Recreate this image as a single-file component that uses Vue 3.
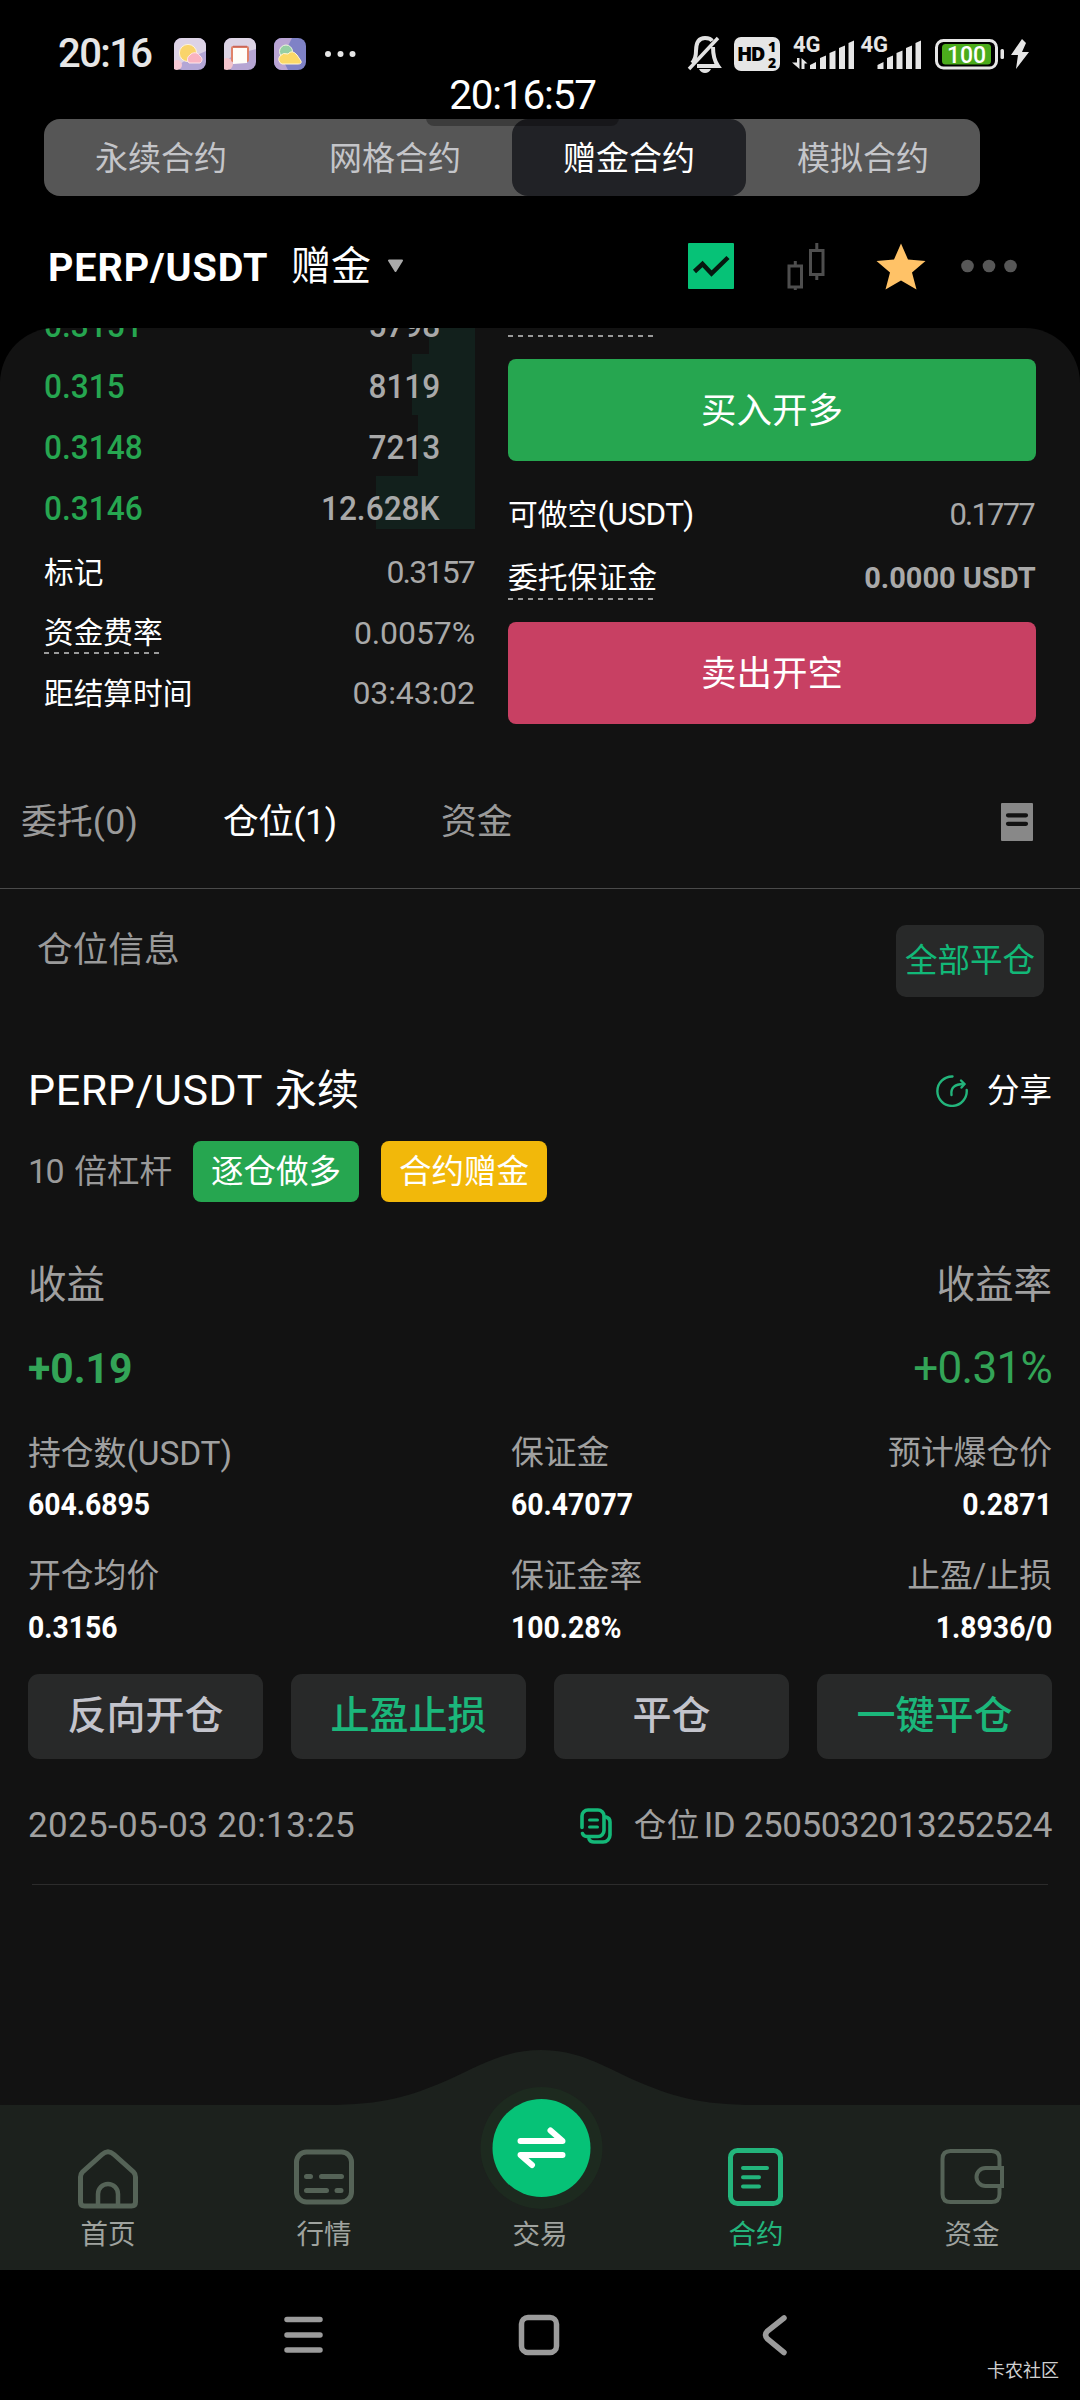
<script setup>
const tabs = [
  { label: '永续合约' },
  { label: '网格合约' },
  { label: '赠金合约', active: true },
  { label: '模拟合约' },
]

const bids = [
  { price: '0.3151', qty: '5798', depth: 46 },
  { price: '0.315', qty: '8119', depth: 63 },
  { price: '0.3148', qty: '7213', depth: 57 },
  { price: '0.3146', qty: '12.628K', depth: 99 },
]

const info = [
  { label: '标记', value: '0.3157', tight: true },
  { label: '资金费率', value: '0.0057%', dashed: true },
  { label: '距结算时间', value: '03:43:02' },
]

const stats = [
  { label: '持仓数', unit: '(USDT)', value: '604.6895' },
  { label: '保证金', value: '60.47077' },
  { label: '预计爆仓价', value: '0.2871' },
  { label: '开仓均价', value: '0.3156' },
  { label: '保证金率', value: '100.28%' },
  { label: '止盈/止损', value: '1.8936/0' },
]

const actions = [
  { label: '反向开仓' },
  { label: '止盈止损', green: true },
  { label: '平仓' },
  { label: '一键平仓', green: true },
]
</script>

<template>
  <div class="screen">
    <header class="status">
      <div class="status-left">
        <span class="status-time">20:16</span>
        <svg class="app" viewBox="0 0 32 32">
          <rect width="32" height="32" rx="8" fill="#b3a6d6" />
          <path d="M0 8a8 8 0 0 1 8-8h16a8 8 0 0 1 8 8v5L12 22 0 30z" fill="#ddd3e6" />
          <circle cx="3" cy="27" r="5" fill="#f6c9d4" />
          <circle cx="14" cy="15" r="8.6" fill="#f9d46b" stroke="#fff3d6" />
          <path d="M15 25a5 5 0 0 1 1-8 6 6 0 0 1 10 1 4 4 0 0 1 0 7z" fill="#f9b3c1" stroke="#ffe6ea" />
        </svg>
        <svg class="app" viewBox="0 0 32 32">
          <rect width="32" height="32" rx="8" fill="#b6a5d3" />
          <path d="M0 8a8 8 0 0 1 8-8h16a8 8 0 0 1 8 8v3L10 17 0 24z" fill="#dcd3e4" />
          <circle cx="3" cy="26" r="6" fill="#f4c4cc" />
          <rect x="7" y="8" width="18" height="16" rx="2" fill="#e08267" />
          <path d="M9 10h14v15l-14 1z" fill="#fffdf8" />
          <path d="M9 8.500h14" stroke="#c96558" stroke-width="1.500" />
        </svg>
        <svg class="app" viewBox="0 0 32 32">
          <rect width="32" height="32" rx="8" fill="#7f82c6" />
          <path d="M0 8a8 8 0 0 1 8-8h10L8 20l6 12H8a8 8 0 0 1-8-8z" fill="#b9a4d4" />
          <circle cx="12" cy="13.500" r="6.500" fill="#97cfa4" stroke="#eef6dc" />
          <path d="M8 26a5 5 0 0 1-2-8q3-4 8-2 4-5 9 1l4 6q1 3-3 3z" fill="#fbd968" stroke="#fff6d8" />
        </svg>
        <svg class="more" viewBox="0 0 32 8">
          <circle cx="4" cy="4" r="3" /><circle cx="16.500" cy="4" r="3" /><circle cx="28.500" cy="4" r="3" />
        </svg>
      </div>
      <svg class="status-right" viewBox="686 34 346 42">
        <g fill="none" stroke="#e2e2e2" stroke-width="4">
          <path d="M692 63q4-4 4-12c0-8 3-13 9-13 3 0 6 1 7 3" />
          <path d="M713 47q0 12 5 19H697" />
          <path d="M689 69L718 38" stroke-width="3.500" />
        </g>
        <path d="M699 69h12q-2 4-6 4t-6-4z" fill="#e2e2e2" />
        <rect x="734" y="37" width="46" height="34" rx="7" fill="#e6e6e6" />
        <text x="737" y="61" class="hd">HD</text>
        <text x="768" y="52" class="hd-num">1</text>
        <text x="768" y="67.500" class="hd-num">2</text>
        <g fill="#e6e6e6">
          <text x="793" y="52" class="net">4G</text>
          <text x="860.500" y="52" class="net">4G</text>
          <path d="M797 58h2.500v11L792 62.500h5zM801.500 69V58l6 5.500h-3V69z" />
          <path d="M810 69v-4l6-3v7zM820 69V58l6-2.500V69zM829.500 69V53l6-2.500V69zM839 69V48l6-2.500V69zM848.500 69V43l5.500-2.500V69z" />
          <path d="M877.500 69v-4l6-3v7zM887 69V58l6-2.500V69zM896.500 69V53l6-2.500V69zM906 69V48l6-2.500V69zM915.500 69V43l5.500-2.500V69z" />
          <rect x="1000.500" y="49" width="3.500" height="10" rx="1.500" />
          <path d="M1022 39l-11 16h7l-2 14 13-17h-7l4-9z" />
        </g>
        <rect x="936.500" y="40.500" width="60" height="27.500" rx="7" fill="none" stroke="#e6e6e6" stroke-width="3" />
        <rect x="942" y="44" width="49" height="20.500" rx="3.500" fill="#4bab1c" />
        <text x="966.500" y="62.500" class="batt">100</text>
      </svg>
      <div class="clock">20:16:57</div>
    </header>

    <nav class="tabs">
      <div v-for="t in tabs" :key="t.label" class="tab" :class="{ active: t.active }">{{ t.label }}</div>
    </nav>

    <section class="pair">
      <b class="pair-name">PERP/USDT</b>
      <span class="pair-kind">赠金</span>
      <svg class="caret" viewBox="0 0 17 14"><path d="M2 1.500h13L8.500 12z" fill="#aaa" stroke="#aaa" stroke-width="2" stroke-linejoin="round" /></svg>
      <svg class="pair-tools" viewBox="0 0 334 48">
        <rect x="0" y="1" width="46" height="46" rx="1" fill="#06c277" />
        <path d="M6.500 29.500l8-7.500 9 9.500L40 15.500" fill="none" stroke="#06170f" stroke-width="4.500" />
        <g fill="none" stroke="#4e4e4e" stroke-width="3">
          <rect x="101" y="24" width="12.500" height="21" /><path d="M107.300 19v5M107.300 45v3" />
          <rect x="122.500" y="8.500" width="12.500" height="24" /><path d="M128.800 1v7M128.800 33v5" />
        </g>
        <path d="M213 1.500l7 16 17.500 1.500-13.500 11.500 4.500 17L213 38.500l-15.500 9 4.500-17L188.500 19l17.500-1.500z" fill="#ffc267" />
        <g fill="#575757"><circle cx="279.500" cy="24" r="6.300" /><circle cx="301" cy="24" r="6.300" /><circle cx="322.500" cy="24" r="6.300" /></g>
      </svg>
    </section>

    <main class="panel">
      <section class="trade">
        <div class="book">
          <div v-for="b in bids" :key="b.price" class="bid">
            <span class="din price">{{ b.price }}</span>
            <span class="qty"><span class="din right">{{ b.qty }}</span></span>
            <i class="depth" :style="{ width: b.depth + 'px' }"></i>
          </div>
          <div class="info">
            <div v-for="r in info" :key="r.label" class="info-row">
              <span class="info-label" :class="{ dashed: r.dashed }">{{ r.label }}</span>
              <span class="info-value" :class="{ tight: r.tight }">{{ r.value }}</span>
            </div>
          </div>
        </div>
        <div class="order">
          <div class="dash-line"></div>
          <button class="big buy">买入开多</button>
          <div class="order-rows">
            <div class="order-row"><span class="short">可做空<span class="unit">(USDT)</span></span><span class="avail">0.1777</span></div>
            <div class="order-row"><span class="dashed">委托保证金</span><b class="margin">0.0000 USDT</b></div>
          </div>
          <button class="big sell">卖出开空</button>
        </div>
      </section>

      <nav class="subtabs">
        <span class="sub s1">委托(0)</span>
        <span class="sub s2 on">仓位(1)</span>
        <span class="sub">资金</span>
        <svg class="doc" viewBox="0 0 32 38"><rect width="32" height="38" rx="1" fill="#888" /><path d="M7 12.300h18M7 20.800h18" stroke="#121212" stroke-width="4.200" stroke-linecap="round" /></svg>
      </nav>

      <div class="list-head">
        <span class="list-title">仓位信息</span>
        <button class="close-all">全部平仓</button>
      </div>

      <article class="position">
        <div class="title-row">
          <span class="symbol">PERP/USDT</span><span class="kind">永续</span>
          <span class="share">
            <svg viewBox="0 0 32 32" fill="none" stroke="#23b57c" stroke-width="2.400" stroke-linecap="round">
              <path d="M16.500 1.500A14.700 14.700 0 1 0 30.700 15" />
              <path d="M15.500 20c-1-7 3-11 12-11" /><path d="M25 5.500l3.500 3.500-3 3.500" />
            </svg>分享
          </span>
        </div>
        <div class="badge-row">
          <span class="lever"><span class="lever-num">10</span> 倍杠杆</span>
          <span class="badge long">逐仓做多</span>
          <span class="badge gift">合约赠金</span>
        </div>
        <div class="pnl-labels"><span>收益</span><span>收益率</span></div>
        <div class="pnl-values"><b class="pnl">+0.19</b><span class="rate">+0.31%</span></div>
        <div class="stats">
          <div v-for="s in stats" :key="s.label" class="stat">
            <div class="stat-label">{{ s.label }}<span v-if="s.unit" class="stat-unit">{{ s.unit }}</span></div>
            <div class="stat-value"><b>{{ s.value }}</b></div>
          </div>
        </div>
        <div class="actions">
          <button v-for="a in actions" :key="a.label" class="action" :class="{ green: a.green }">{{ a.label }}</button>
        </div>
        <div class="meta">
          <span class="num">2025-05-03 20:13:25</span>
          <span class="pid">
            <svg viewBox="0 0 32 36" fill="none" stroke="#14b878" stroke-width="3.600" stroke-linecap="round">
              <path d="M2 19.500V8a6 6 0 0 1 6-6h10a6 6 0 0 1 6 6v14.500a6 6 0 0 1-6 6H6.500a4.500 4.500 0 0 1-4-3" />
              <path d="M26 9q4 1 4 5v13a7 7 0 0 1-7 7h-9q-4 0-5-3" />
              <path d="M9.500 12h8M9.500 19h8" stroke-width="3" />
            </svg>
            <span class="pid-label">仓位</span><span class="num id">ID 2505032013252524</span>
          </span>
        </div>
      </article>

      <nav class="bottom">
        <svg class="hump" viewBox="0 0 1080 220">
          <path d="M0 55H325C385 55 410 46 448 30 480 15 505 0 541 0S602 15 634 30C672 46 697 55 757 55H1080V220H0z" fill="#1c211d" />
          <circle cx="541.500" cy="98" r="61" fill="#1d2a1f" />
          <circle cx="541.500" cy="98" r="49" fill="#06c277" />
          <path d="M520.500 91H562.500L550.500 80.500M562.500 105H520.500L532 115" fill="none" stroke="#fff" stroke-width="6" stroke-linecap="round" stroke-linejoin="round" />
        </svg>
        <div class="item">
          <svg viewBox="0 0 64 62" fill="none" stroke="#556357" stroke-width="5">
            <path d="M4.500 55V30q0-3 2-5L26 7.500q6-5.500 12 0L57.500 25q2 2 2 5v25q0 4-4 4h-47q-4 0-4-4z" />
            <path d="M22 59V47a10 10 0 0 1 20 0v12" stroke-width="4.500" />
          </svg>首页
        </div>
        <div class="item">
          <svg viewBox="0 0 64 62" fill="none" stroke="#556357" stroke-width="5">
            <rect x="4.500" y="5" width="55" height="50" rx="10" />
            <path d="M14.500 29.500h4M29.500 29.500h20M14.500 43.500h20M45 43.500h4" stroke-linecap="round" />
          </svg>行情
        </div>
        <div class="item">交易</div>
        <div class="item on">
          <svg viewBox="0 0 64 62" fill="none" stroke="#23b57c" stroke-width="5">
            <rect x="6.500" y="3.500" width="50" height="53" rx="7" />
            <path d="M19 21h24M19 30.300h16M19 39.500h16" stroke-width="4" stroke-linecap="round" />
          </svg>合约
        </div>
        <div class="item">
          <svg viewBox="0 0 64 62" fill="none" stroke="#556357" stroke-width="4">
            <path d="M59.500 20V12q0-8-8-8h-41q-8 0-8 8v35q0 8 8 8h41q8 0 8-8v-7" />
            <path d="M62 21H45.500a9 9 0 0 0 0 18H62z" />
          </svg>资金
        </div>
      </nav>
    </main>

    <footer class="system">
      <svg viewBox="0 0 504 44" fill="none" stroke="#9b9b9b" stroke-width="5.500" stroke-linecap="round">
        <path d="M3 6.500h33M3 22h33M3 37h33" />
        <rect x="237.500" y="4.500" width="35" height="35" rx="6.500" />
        <path d="M500 5L483.500 18q-4 4 0 8L500 39.500" />
      </svg>
      <span class="mark">卡农社区</span>
    </footer>
  </div>
</template>

<style>
body {
  background: #000;
}
</style>

<style scoped>
.screen {
  width: 1080px;
  height: 2400px;
  display: flex;
  flex-direction: column;
  overflow: hidden;
  background: #000;
  color: #fff;
  font-family: Roboto, "Noto Sans CJK SC", sans-serif;
  line-height: 1.2;
  white-space: nowrap;
}
svg {
  display: block;
  flex: none;
}
button {
  border: 0;
  padding: 0;
  font: inherit;
  color: inherit;
}
.status {
  position: relative;
  height: 119px;
  flex: none;
  display: flex;
  justify-content: space-between;
}
.status-left {
  height: 108px;
  display: flex;
  align-items: center;
  padding-left: 58px;
}
.status-time {
  width: 116px;
  font-size: 40px;
  font-weight: 500;
  letter-spacing: -1.600px;
  color: #e6e6e6;
}
.app {
  width: 32px;
  height: 32px;
  margin-right: 18px;
}
.more {
  width: 32px;
  height: 8px;
  fill: #e6e6e6;
}
.status-right {
  width: 346px;
  height: 42px;
  margin: 34px 48px 0 0;
}
.hd {
  font: 800 20px "Open Sans", sans-serif;
  letter-spacing: -1.500px;
}
.hd-num {
  font: 800 14px "Open Sans", sans-serif;
}
.net {
  font: 700 22px Roboto, sans-serif;
}
.batt {
  font: 500 23px Roboto, sans-serif;
  fill: #fff;
  text-anchor: middle;
}
.clock {
  position: absolute;
  z-index: 1;
  left: 426px;
  top: 64px;
  width: 193px;
  height: 62px;
  border-radius: 8px;
  background: rgba(0, 0, 0, 0.3);
  line-height: 62px;
  text-align: center;
  font-size: 40.500px;
  letter-spacing: -1.200px;
}
.tabs {
  flex: none;
  display: flex;
  width: 936px;
  height: 77px;
  margin-left: 44px;
  border-radius: 16px;
  background: #565656;
}
.tab {
  flex: 1;
  border-radius: 16px;
  text-align: center;
  font-size: 33px;
  line-height: 79px;
  color: #c4c5c9;
}
.tab.active {
  background: #212226;
  color: #fff;
}
.pair {
  flex: none;
  height: 132px;
  display: flex;
  align-items: center;
  padding: 8px 58px 0 48px;
  box-sizing: border-box;
}
.pair-name {
  width: 243px;
  padding-top: 3px;
  font-size: 39.500px;
  letter-spacing: 0.900px;
}
.pair-kind {
  width: 96px;
  padding-top: 2px;
  font-size: 40px;
}
.caret {
  width: 17px;
  height: 14px;
}
.pair-tools {
  width: 334px;
  height: 48px;
  margin-left: auto;
}
.panel {
  flex: 1;
  display: flex;
  flex-direction: column;
  overflow: hidden;
  border-radius: 55px 55px 0 0;
  background: #121212;
}
.trade {
  display: flex;
  justify-content: space-between;
  height: 396px;
  padding: 0 44px;
}
.book {
  width: 431px;
  margin-top: -35px;
}
.bid {
  position: relative;
  display: flex;
  justify-content: space-between;
  height: 61px;
  padding-right: 35px;
  font-size: 34px;
  line-height: 64px;
}
.bid:nth-child(4) {
  height: 53px;
}
.din {
  position: relative;
  z-index: 1;
  display: inline-block;
  font-weight: 500;
  transform: scaleX(0.93);
  transform-origin: left;
}
.din.right {
  transform-origin: right;
}
.price {
  color: #26a650;
}
.qty {
  color: #a9a9a9;
}
.depth {
  position: absolute;
  right: 0;
  top: 0;
  height: 100%;
  background: #12201c;
}
.info {
  padding-top: 13px;
}
.info-row,
.order-row {
  display: flex;
  justify-content: space-between;
  align-items: center;
}
.info-row {
  height: 60.500px;
}
.info-label {
  font-size: 29.700px;
  line-height: 43px;
}
.info-value {
  font-size: 32px;
  letter-spacing: -0.100px;
  color: #a9a9a9;
}
.info-value.tight {
  margin-right: 1px;
  letter-spacing: -1.800px;
}
.dashed,
.dash-line {
  background: repeating-linear-gradient(90deg, #9a9a9a 0 5px, transparent 5px 10px) 0 100% / 100% 2px no-repeat;
}
.order {
  width: 528px;
}
.dash-line {
  width: 146px;
  height: 9px;
  margin-bottom: 22px;
}
.big {
  display: block;
  width: 100%;
  height: 102px;
  border-radius: 8px;
  font-size: 35.500px;
  line-height: 104px;
}
.buy {
  background: #26a650;
}
.sell {
  background: #c84063;
}
.order-rows {
  padding: 21px 0 12px;
}
.order-row {
  height: 64px;
  font-size: 29.800px;
  line-height: 44px;
}
.short {
  padding-top: 2px;
}
.unit {
  font-size: 31.500px;
  letter-spacing: -0.600px;
}
.avail {
  padding-top: 2px;
  margin-right: 2px;
  font-size: 31px;
  letter-spacing: -1.800px;
  color: #a9a9a9;
}
.margin {
  font-size: 30px;
  color: #a9a9a9;
  transform: scaleX(0.965);
  transform-origin: right;
}
.subtabs {
  display: flex;
  align-items: center;
  height: 132px;
  margin-top: 32px;
  padding: 0 47px 0 21px;
  border-bottom: 1px solid #4a4a4a;
  font-size: 35.700px;
  color: #9a9a9a;
}
.s1 {
  width: 202px;
  letter-spacing: 0.200px;
}
.s2 {
  width: 218px;
  letter-spacing: -0.500px;
}
.sub.on {
  color: #fff;
}
.doc {
  width: 32px;
  height: 38px;
  margin-left: auto;
}
.list-head {
  display: flex;
  justify-content: space-between;
  padding: 36px 36px 0 37px;
}
.list-title {
  font-size: 35.700px;
  line-height: 50px;
  color: #9a9a9a;
}
.close-all {
  width: 148px;
  height: 72px;
  border-radius: 10px;
  background: #282929;
  color: #12b878;
  font-size: 32.500px;
}
.position {
  margin-top: 64px;
  padding: 0 28px;
}
.title-row {
  display: flex;
  align-items: center;
  height: 60px;
}
.symbol {
  width: 247px;
  font-size: 43px;
  letter-spacing: 0.600px;
}
.kind {
  font-size: 42px;
}
.share {
  display: flex;
  align-items: center;
  gap: 19px;
  margin-left: auto;
  font-size: 32.500px;
}
.share svg {
  width: 32px;
  height: 32px;
}
.badge-row {
  display: flex;
  align-items: center;
  gap: 22px;
  height: 61px;
  margin-top: 20px;
}
.lever {
  width: 143px;
  font-size: 32.700px;
  word-spacing: 3px;
  color: #9a9a9a;
}
.lever-num {
  font-size: 34px;
  letter-spacing: -1.600px;
}
.badge {
  width: 166px;
  height: 61px;
  border-radius: 8px;
  font-size: 32.500px;
  line-height: 63px;
  text-align: center;
}
.long {
  background: #26a650;
}
.gift {
  background: #f2b80a;
}
.pnl-labels,
.pnl-values {
  display: flex;
  align-items: center;
  justify-content: space-between;
}
.pnl-labels {
  height: 60px;
  margin-top: 53px;
  font-size: 38.500px;
  color: #a0a0a0;
}
.pnl-values {
  height: 61px;
  margin-top: 23px;
  color: #33a457;
}
.pnl {
  font-size: 43px;
  transform: scaleX(0.95);
  transform-origin: left;
}
.rate {
  font-size: 44px;
  letter-spacing: -0.700px;
}
.stats {
  display: grid;
  grid-template-columns: 483px 1fr auto;
  row-gap: 19px;
  margin-top: 29px;
}
.stat:nth-child(3n) {
  text-align: right;
}
.stat-label {
  height: 48px;
  font-size: 32.800px;
  line-height: 51px;
  color: #a0a0a0;
}
.stat-unit {
  font-size: 33.500px;
  letter-spacing: -0.100px;
}
.stat-value {
  height: 56px;
  font-size: 31px;
  line-height: 57px;
}
.stat-value b {
  display: inline-block;
  transform: scaleX(0.915);
  transform-origin: left;
}
.stat:nth-child(3n) b {
  transform-origin: right;
}
.actions {
  display: flex;
  gap: 28px;
  margin-top: 19px;
}
.action {
  flex: 1;
  height: 85px;
  border-radius: 11px;
  background: #282929;
  color: #c3c4cc;
  font-size: 39px;
  font-weight: 500;
}
.action.green {
  color: #1bb77b;
}
.meta {
  display: flex;
  align-items: center;
  justify-content: space-between;
  height: 60px;
  margin-top: 37px;
  color: #a0a0a0;
  font-size: 32.500px;
}
.num {
  font-size: 35px;
  letter-spacing: 0.350px;
}
.num.id {
  margin-left: 4px;
  letter-spacing: -0.400px;
}
.pid {
  display: flex;
  align-items: center;
}
.pid-label {
  letter-spacing: 0.500px;
}
.pid svg {
  width: 32px;
  height: 36px;
  margin-right: 22px;
}
.position::after {
  content: "";
  display: block;
  height: 1px;
  margin: 28px 4px 0;
  background: #2c2c2c;
}
.bottom {
  position: relative;
  display: flex;
  height: 220px;
  margin-top: auto;
}
.hump {
  position: absolute;
  inset: 0;
  width: 1080px;
  height: 220px;
}
.item {
  position: relative;
  flex: 1;
  display: flex;
  flex-direction: column;
  justify-content: flex-end;
  align-items: center;
  padding-bottom: 15px;
  font-size: 27.500px;
  line-height: 40px;
  color: #9fa39f;
}
.item svg {
  width: 64px;
  height: 62px;
  margin-bottom: 6px;
}
.item.on {
  color: #23b57c;
}
.system {
  position: relative;
  flex: none;
  height: 130px;
  padding: 43px 0 0 284px;
  box-sizing: border-box;
}
.system svg {
  width: 504px;
  height: 44px;
}
.mark {
  position: absolute;
  right: 21px;
  bottom: 17px;
  font-size: 18px;
  line-height: 24px;
  color: #d0d0d0;
}
</style>
